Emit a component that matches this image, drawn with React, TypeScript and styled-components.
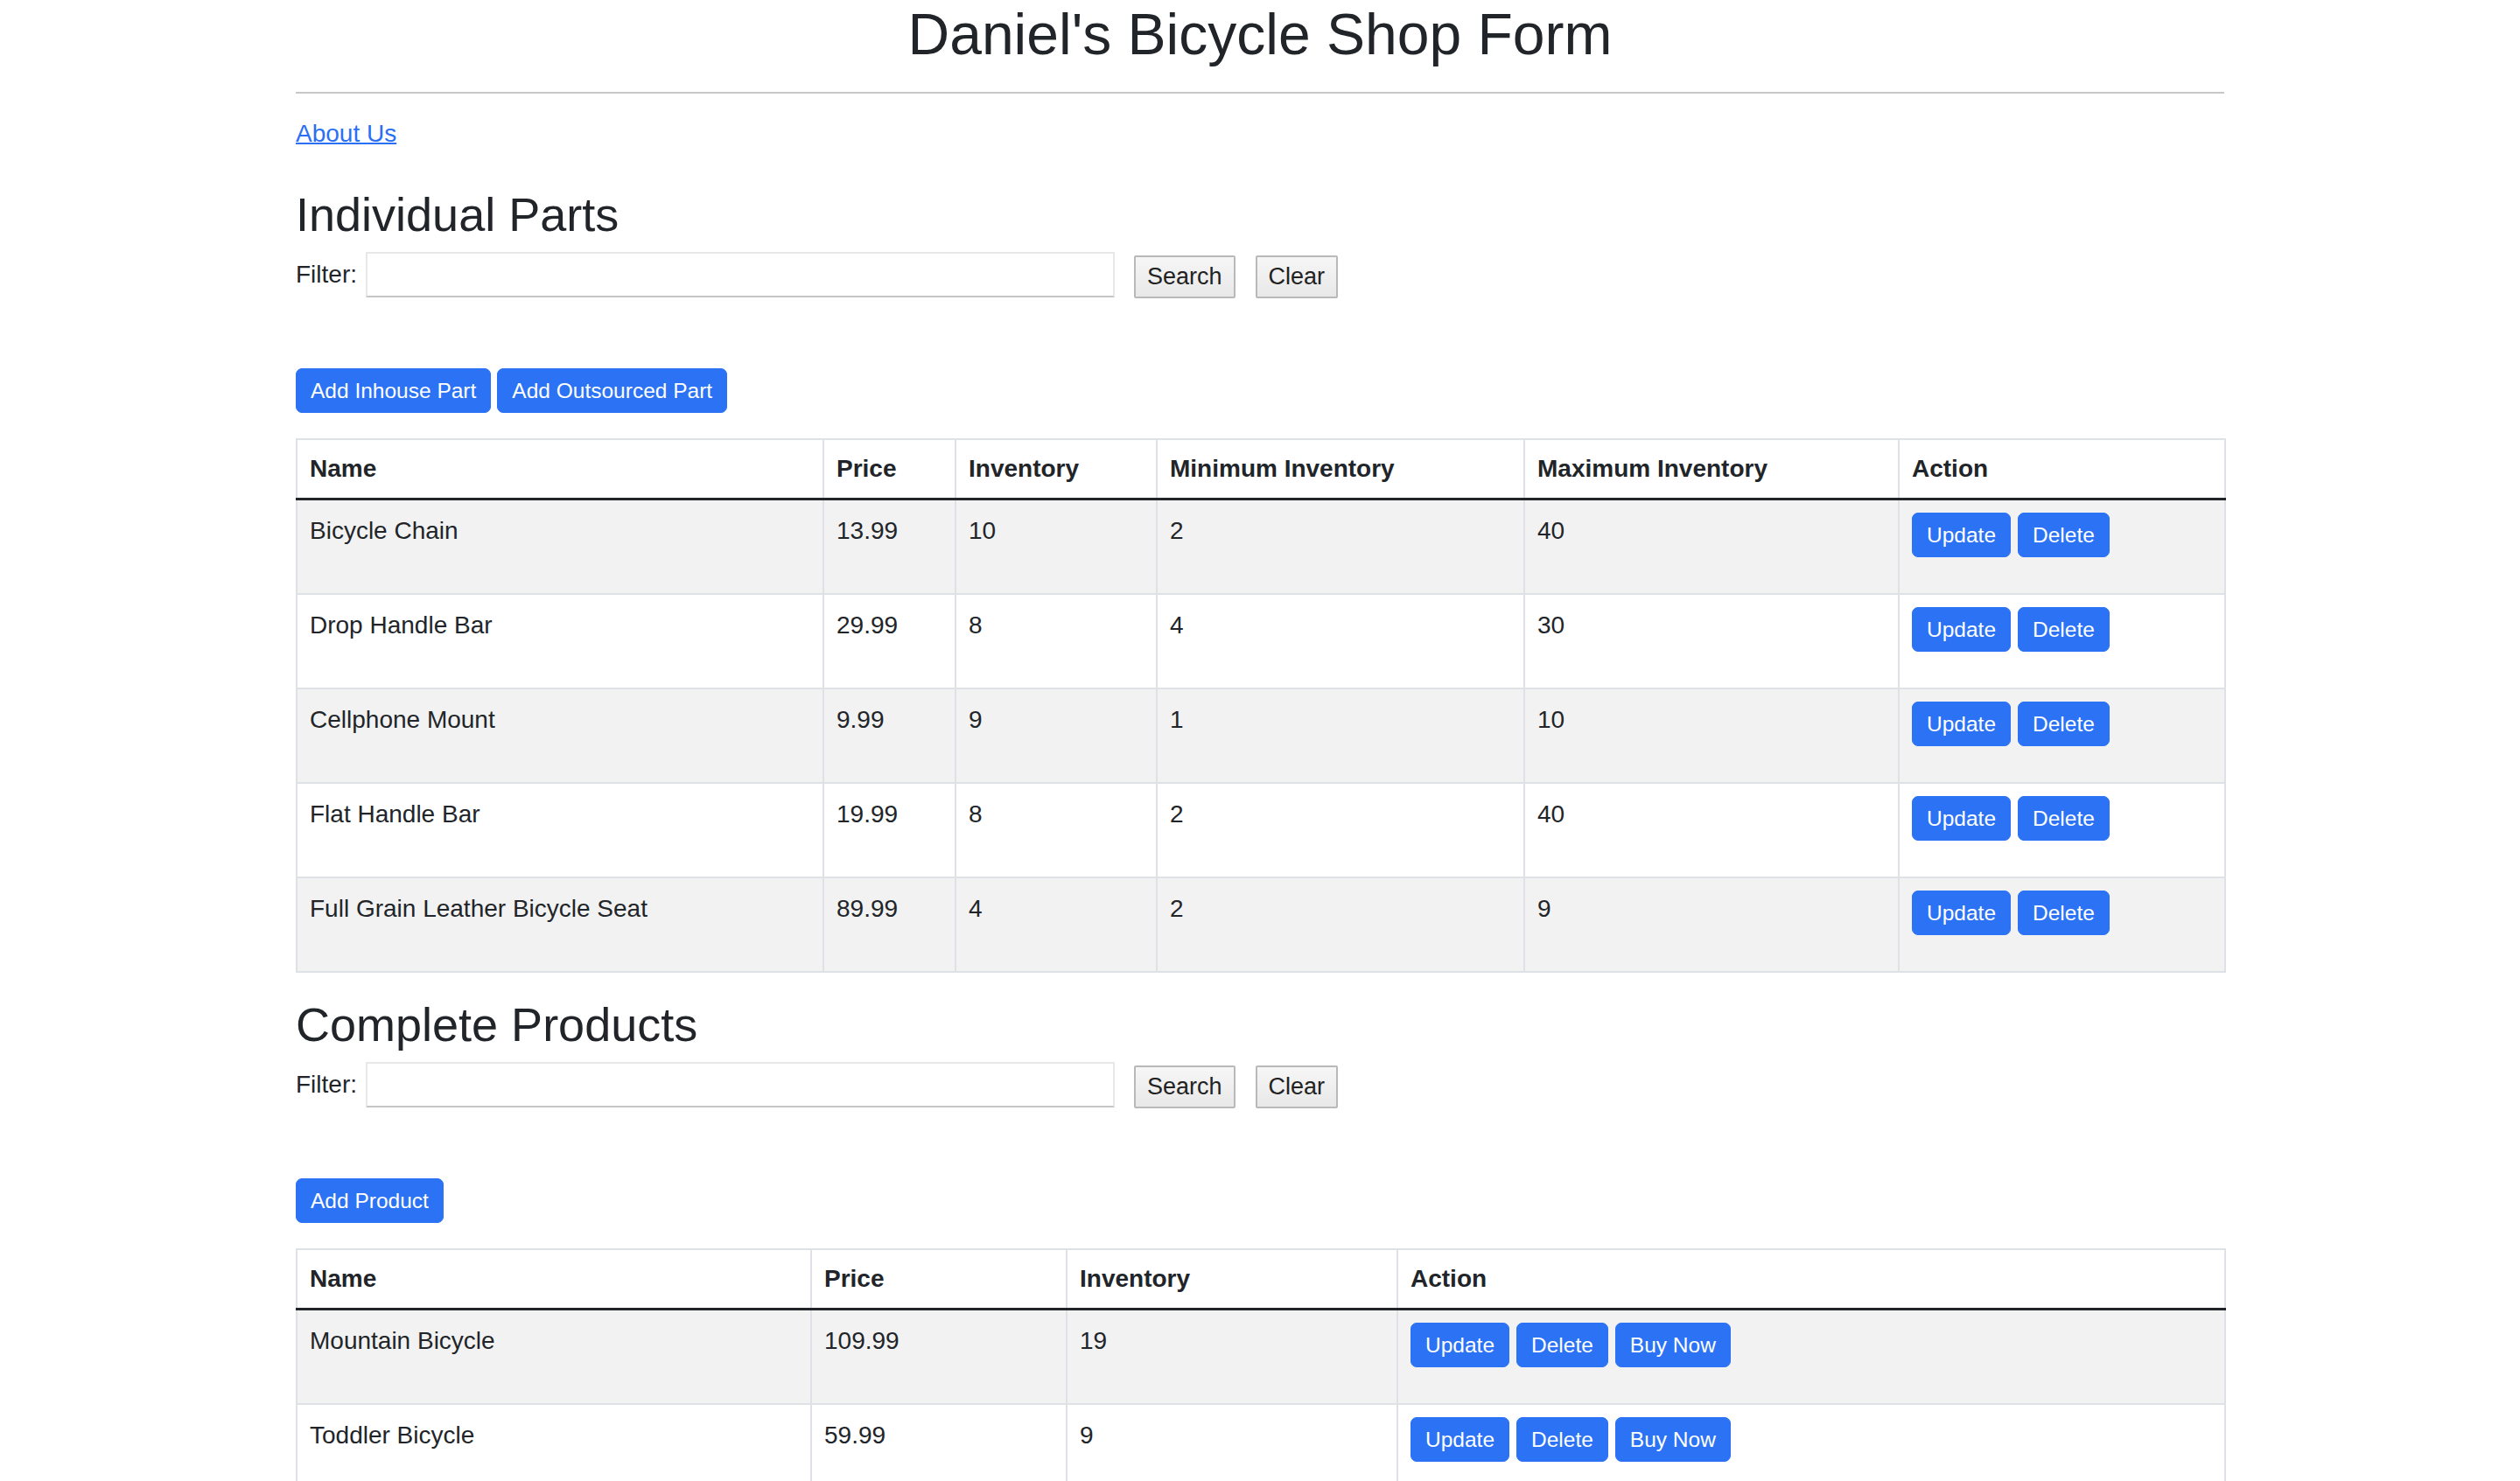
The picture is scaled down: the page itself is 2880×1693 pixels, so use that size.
import styled, { createGlobalStyle } from "styled-components";

type Part = {
  name: string;
  price: string;
  inv: number;
  min: number;
  max: number;
};

type Product = {
  name: string;
  price: string;
  inv: number;
};

const parts: Part[] = [
  { name: "Bicycle Chain", price: "13.99", inv: 10, min: 2, max: 40 },
  { name: "Drop Handle Bar", price: "29.99", inv: 8, min: 4, max: 30 },
  { name: "Cellphone Mount", price: "9.99", inv: 9, min: 1, max: 10 },
  { name: "Flat Handle Bar", price: "19.99", inv: 8, min: 2, max: 40 },
  { name: "Full Grain Leather Bicycle Seat", price: "89.99", inv: 4, min: 2, max: 9 },
];

const products: Product[] = [
  { name: "Mountain Bicycle", price: "109.99", inv: 19 },
  { name: "Toddler Bicycle", price: "59.99", inv: 9 },
];

const GlobalStyle = createGlobalStyle`
  body {
    margin: 0;
    background: #fff;
    color: #212529;
    font-family: "Liberation Sans", Arial, sans-serif;
    font-size: 28px;
    line-height: 42px;
  }
`;

const Page = styled.div`
  width: 2204px;
  margin: 0 auto;
`;

const Title = styled.h1`
  margin: 0;
  font-size: 66px;
  font-weight: 500;
  line-height: 79px;
  text-align: center;
`;

const Rule = styled.hr`
  margin: 26px 0 0;
  border: 0;
  border-top: 2px solid #c8c8c8;
`;

const LinkLine = styled.p`
  margin: 25px 0 39px;
`;

const AboutLink = styled.a`
  color: #2b6ff5;
  text-decoration: underline;
  text-decoration-thickness: 2px;
`;

const SectionTitle = styled.h2`
  margin: 0;
  font-size: 54px;
  font-weight: 500;
  line-height: 65px;
`;

const FilterRow = styled.form`
  display: flex;
  align-items: center;
  margin-top: 10px;
  height: 52px;
`;

const FilterLabel = styled.label`
  margin-right: 10px;
`;

const FilterInput = styled.input`
  box-sizing: border-box;
  width: 856px;
  height: 52px;
  margin-right: 22px;
  border: 2px solid #e8e8e8;
  border-bottom-color: #c6c6c6;
  background: #fff;
  font: inherit;
  outline: none;
`;

const PlainButton = styled.button`
  align-self: flex-end;
  margin-right: 23px;
  margin-bottom: -1px;
  padding: 7px 13px;
  border: 2px solid #b9b9b9;
  border-radius: 2px;
  background: linear-gradient(#f6f6f6, #e8e8e8);
  color: #222;
  font-family: "Liberation Sans", Arial, sans-serif;
  font-size: 27px;
  line-height: 31px;
`;

const Toolbar = styled.div`
  display: flex;
  gap: 7px;
  margin: 81px 0 29px;
`;

const PrimaryButton = styled.a`
  display: inline-block;
  padding: 7px 16px;
  border: 1px solid #2b72f5;
  border-radius: 7px;
  background: #2b72f5;
  color: #fff;
  font-size: 24.5px;
  line-height: 35px;
  text-decoration: none;
  white-space: nowrap;
`;

const DataTable = styled.table`
  width: 100%;
  table-layout: fixed;
  border-collapse: collapse;
  margin-bottom: 27px;
  border: 2px solid #dee2e6;
`;

const Col = styled.col<{ $w: number }>`
  width: ${({ $w }) => $w}px;
`;

const HeadCell = styled.th`
  padding: 12px 14px;
  border: 2px solid #dee2e6;
  border-bottom: 3px solid #212529;
  font-weight: 700;
  text-align: left;
  vertical-align: bottom;
`;

const BodyRow = styled.tr`
  &:nth-child(odd) {
    background: #f2f2f2;
  }
  &:first-child > td {
    border-top: 3px solid #212529;
  }
`;

const Cell = styled.td`
  padding: 14px;
  border: 2px solid #dee2e6;
  vertical-align: top;
`;

const ActionGroup = styled.div`
  display: flex;
  gap: 8px;
  margin-bottom: 27px;
`;

const FilterBar = () => (
  <FilterRow onSubmit={(e) => e.preventDefault()}>
    <FilterLabel>Filter:</FilterLabel>
    <FilterInput type="text" />
    <PlainButton type="submit">Search</PlainButton>
    <PlainButton type="button">Clear</PlainButton>
  </FilterRow>
);

export default function App() {
  return (
    <>
      <GlobalStyle />
      <Page>
        <Title>Daniel's Bicycle Shop Form</Title>
        <Rule />
        <LinkLine>
          <AboutLink href="#">About Us</AboutLink>
        </LinkLine>

        <SectionTitle>Individual Parts</SectionTitle>
        <FilterBar />
        <Toolbar>
          <PrimaryButton href="#">Add Inhouse Part</PrimaryButton>
          <PrimaryButton href="#">Add Outsourced Part</PrimaryButton>
        </Toolbar>
        <DataTable>
          <colgroup>
            <Col $w={602} />
            <Col $w={151} />
            <Col $w={230} />
            <Col $w={420} />
            <Col $w={428} />
            <Col $w={373} />
          </colgroup>
          <thead>
            <tr>
              <HeadCell>Name</HeadCell>
              <HeadCell>Price</HeadCell>
              <HeadCell>Inventory</HeadCell>
              <HeadCell>Minimum Inventory</HeadCell>
              <HeadCell>Maximum Inventory</HeadCell>
              <HeadCell>Action</HeadCell>
            </tr>
          </thead>
          <tbody>
            {parts.map((p) => (
              <BodyRow key={p.name}>
                <Cell>{p.name}</Cell>
                <Cell>{p.price}</Cell>
                <Cell>{p.inv}</Cell>
                <Cell>{p.min}</Cell>
                <Cell>{p.max}</Cell>
                <Cell>
                  <ActionGroup>
                    <PrimaryButton href="#">Update</PrimaryButton>
                    <PrimaryButton href="#">Delete</PrimaryButton>
                  </ActionGroup>
                </Cell>
              </BodyRow>
            ))}
          </tbody>
        </DataTable>

        <SectionTitle>Complete Products</SectionTitle>
        <FilterBar />
        <Toolbar>
          <PrimaryButton href="#">Add Product</PrimaryButton>
        </Toolbar>
        <DataTable>
          <colgroup>
            <Col $w={588} />
            <Col $w={292} />
            <Col $w={378} />
            <Col $w={946} />
          </colgroup>
          <thead>
            <tr>
              <HeadCell>Name</HeadCell>
              <HeadCell>Price</HeadCell>
              <HeadCell>Inventory</HeadCell>
              <HeadCell>Action</HeadCell>
            </tr>
          </thead>
          <tbody>
            {products.map((p) => (
              <BodyRow key={p.name}>
                <Cell>{p.name}</Cell>
                <Cell>{p.price}</Cell>
                <Cell>{p.inv}</Cell>
                <Cell>
                  <ActionGroup>
                    <PrimaryButton href="#">Update</PrimaryButton>
                    <PrimaryButton href="#">Delete</PrimaryButton>
                    <PrimaryButton href="#">Buy Now</PrimaryButton>
                  </ActionGroup>
                </Cell>
              </BodyRow>
            ))}
          </tbody>
        </DataTable>
      </Page>
    </>
  );
}
